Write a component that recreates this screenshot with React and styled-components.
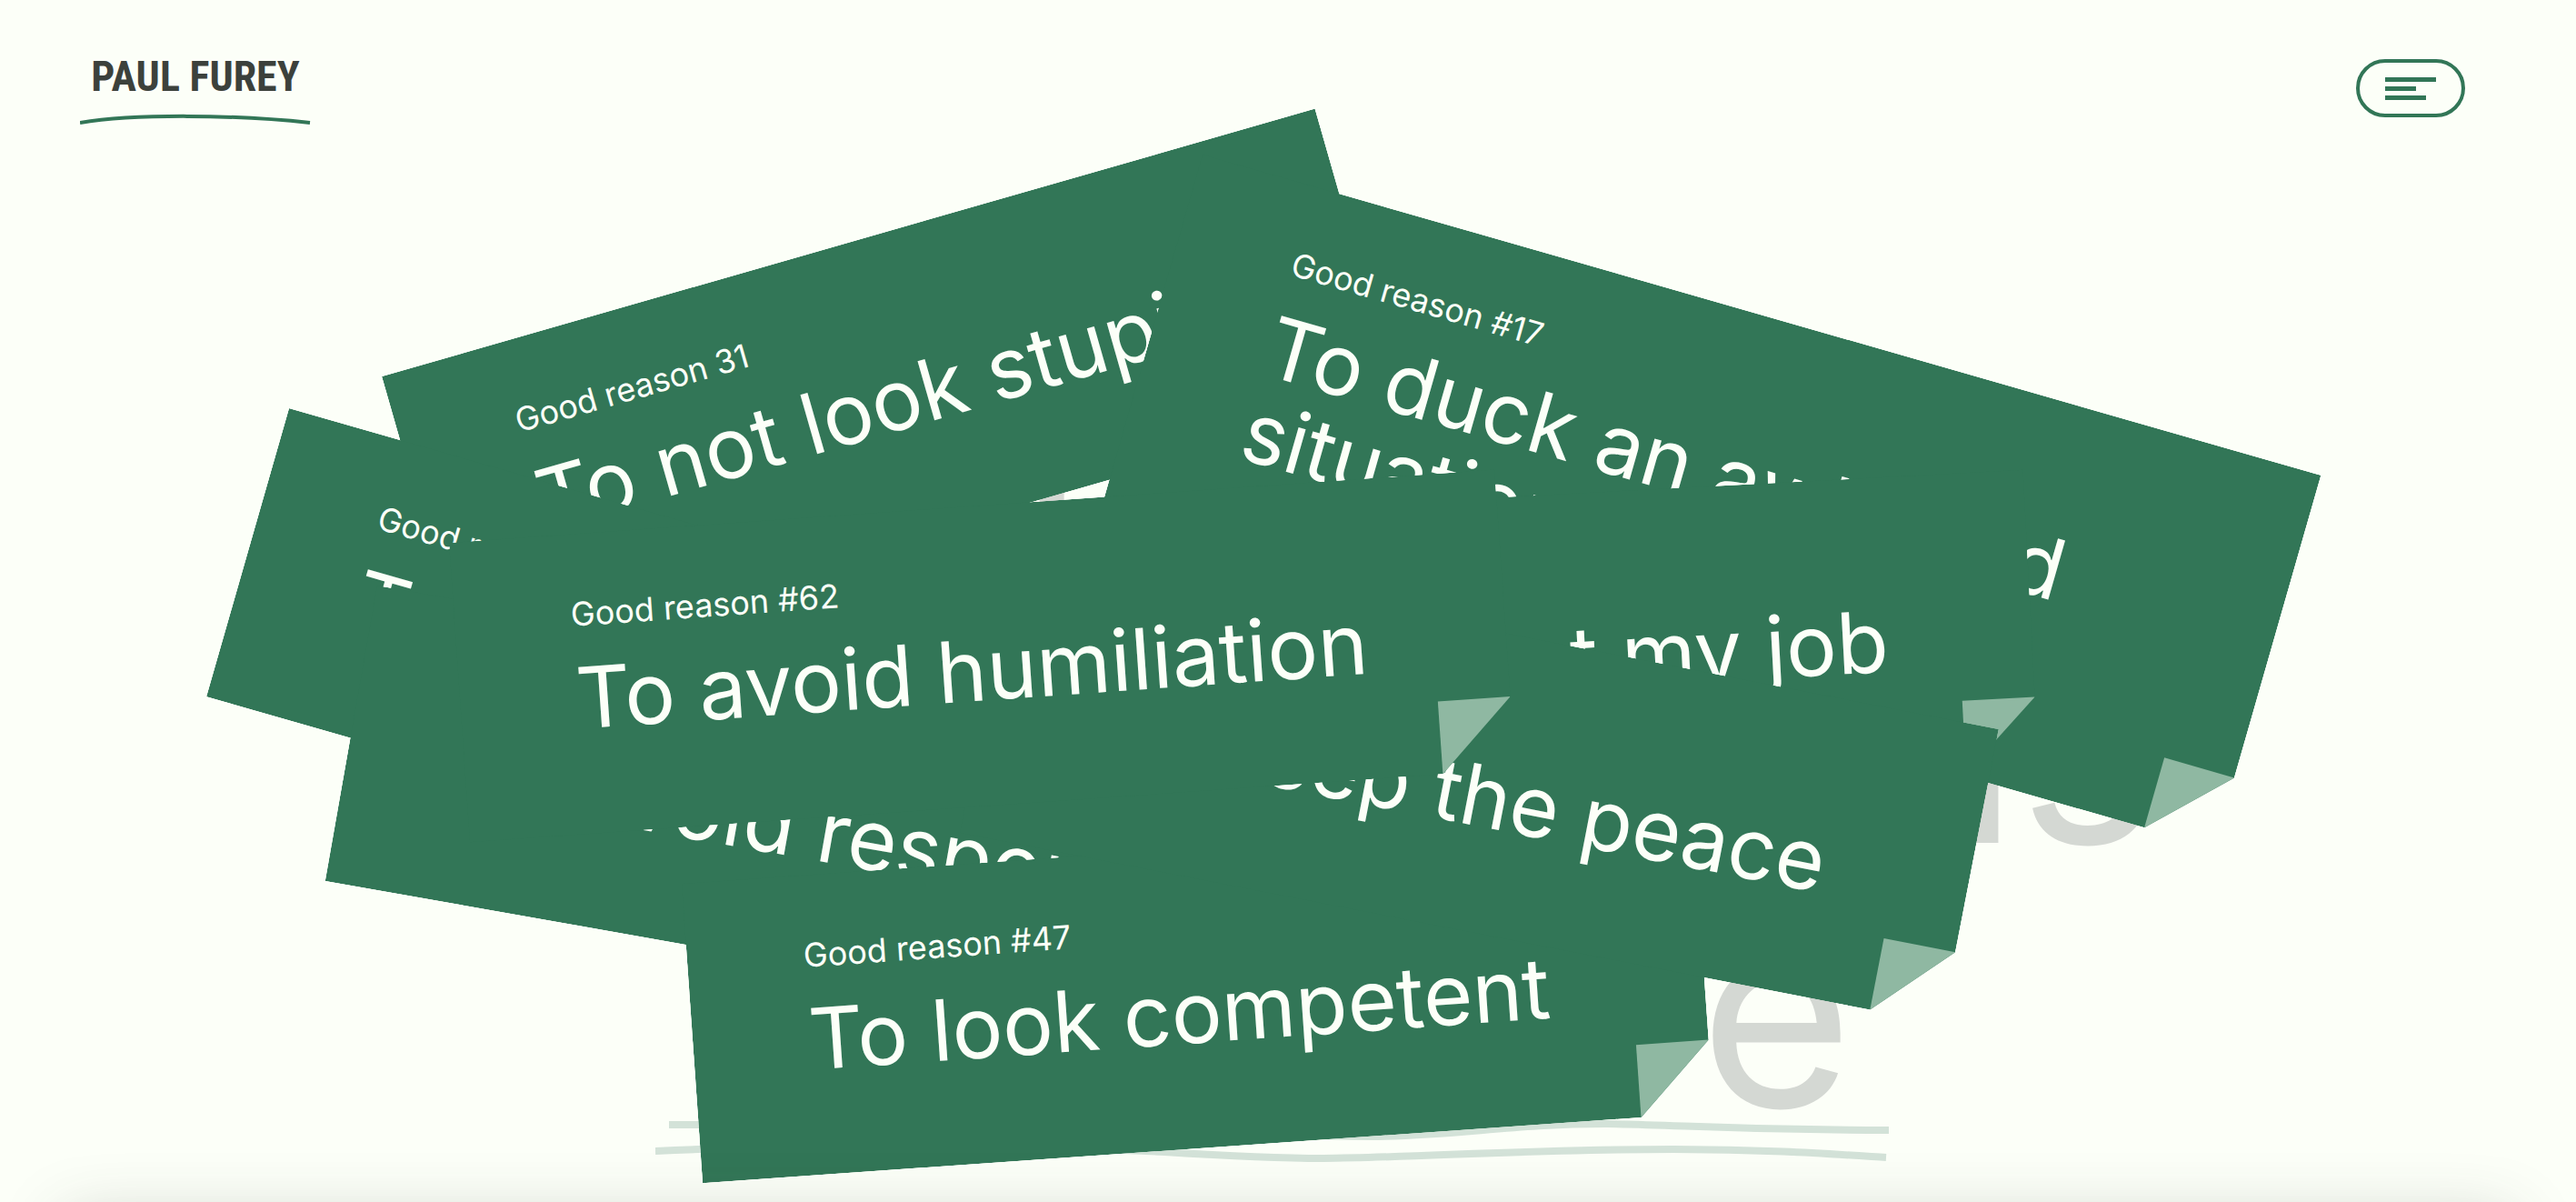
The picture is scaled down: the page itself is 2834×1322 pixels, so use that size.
import React from "react";
import styled, { createGlobalStyle } from "styled-components";

const GREEN = "#327657";
const PAPER = "#fcfff8";
const INK = "#3c413c";

const GlobalStyle = createGlobalStyle`
  *, *::before, *::after { box-sizing: border-box; }
  body {
    margin: 0;
    background: ${PAPER};
    color: ${INK};
    font-family: Inter, "Liberation Sans", sans-serif;
  }
`;

const Page = styled.div`
  position: relative;
  display: flex;
  flex-direction: column;
  height: 100vh;
  overflow: hidden;
`;

const Header = styled.header`
  display: flex;
  align-items: flex-start;
  justify-content: space-between;
  padding: 48px 122px 0 88px;
`;

const Logo = styled.a`
  display: flex;
  flex-direction: column;
  align-items: center;
  color: ${INK};
  text-decoration: none;
`;

const LogoName = styled.span`
  font: 700 46px/72px "Roboto Condensed", "Open Sans Condensed", Roboto, "Liberation Sans", sans-serif;
  white-space: nowrap;
`;

const LogoStroke = styled.svg`
  display: block;
  width: 254px;
  height: 18px;
`;

const MenuButton = styled.button`
  display: flex;
  flex-direction: column;
  justify-content: center;
  gap: 5px;
  width: 120px;
  height: 64px;
  margin-top: 17px;
  padding: 0 28px;
  border: 4px solid ${GREEN};
  border-radius: 32px;
  background: transparent;
  cursor: pointer;
`;

const MenuBar = styled.span`
  width: ${(p) => p.$width}px;
  height: 5px;
  background: ${GREEN};
`;

const Hero = styled.main`
  display: flex;
  flex-direction: column;
  align-items: center;
  padding-top: 249px;
`;

const Title = styled.h1`
  margin: 0;
  color: #d4d8d3;
  font-size: 290px;
  font-weight: 400;
  line-height: 290px;
  text-align: center;
  white-space: nowrap;
`;

const TitleLine = styled.span`
  display: block;
`;

const Underline = styled.svg`
  display: block;
  width: 1358px;
  height: 56px;
  margin: -29px 34px 0 0;
`;

const Notes = styled.ul`
  position: absolute;
  top: 0;
  left: 50%;
  margin: 0;
  padding: 0;
  list-style: none;
`;

const Note = styled.li`
  position: absolute;
  top: ${(p) => p.$y}px;
  left: ${(p) => p.$x}px;
  width: ${(p) => p.$width}px;
  padding: 64px 128px 102px 128px;
  background: ${GREEN};
  color: ${PAPER};
  transform: rotate(${(p) => p.$angle}deg);
  transform-origin: 0 0;
  clip-path: polygon(
    0 0,
    100% 0,
    100% calc(100% - 80px),
    calc(100% - 80px) 100%,
    0 100%
  );

  &::after {
    content: "";
    position: absolute;
    right: 0;
    bottom: 0;
    width: 80px;
    height: 80px;
    background: #8fb8a2;
  }
`;

const NoteLabel = styled.p`
  margin: 0 0 20px;
  font-size: 36px;
  font-weight: 400;
  line-height: 48px;
`;

const NoteText = styled.h2`
  margin: 0;
  font-size: 93px;
  font-weight: 400;
  line-height: 96px;
`;

const NextSection = styled.div`
  position: absolute;
  right: 72px;
  bottom: -220px;
  left: 72px;
  height: 200px;
  box-shadow: 0 0 70px rgba(60, 65, 60, 0.25);
`;

/* x is measured from the horizontal centre of the page */
const notes = [
  { label: "Good reason 31", text: "To not look stupid", x: -997, y: 414, width: 1068, angle: -16 },
  { label: "Good reason #17", text: "To duck an awkward situation", x: -94, y: 170, width: 1280, angle: 16 },
  { label: "Good reason #12", text: "To save face", x: -1099, y: 449, width: 900, angle: 16 },
  { label: "Good reason #23", text: "To protect my job", x: -244, y: 572, width: 1054, angle: -3 },
  { label: "Good reason #38", text: "To avoid responsibility", x: -1002, y: 644, width: 1340, angle: 10 },
  { label: "Good reason #47", text: "To look competent", x: -667, y: 972, width: 1115, angle: -4 },
  { label: "Good reason #54", text: "To keep the peace", x: -298, y: 592, width: 1100, angle: 11 },
  { label: "Good reason #62", text: "To avoid humiliation", x: -923, y: 597, width: 1153, angle: -4 },
];

export default function App() {
  return (
    <>
      <GlobalStyle />
      <Page>
        <Header>
          <Logo href="#">
            <LogoName>PAUL FUREY</LogoName>
            <LogoStroke viewBox="0 0 254 18" fill="none" aria-hidden="true">
              <path d="M0 15C60 5 170 6 253 15" stroke={GREEN} strokeWidth="4" />
            </LogoStroke>
          </Logo>
          <MenuButton type="button" aria-label="Menu">
            <MenuBar $width={56} />
            <MenuBar $width={34} />
            <MenuBar $width={45} />
          </MenuButton>
        </Header>
        <Hero>
          <Title>
            <TitleLine>Their</TitleLine>
            <TitleLine>Good reasons</TitleLine>
            <TitleLine>we share</TitleLine>
          </Title>
          <Underline viewBox="0 0 1358 56" fill="none" aria-hidden="true">
            <path
              d="M15 9H420C560 9 650 22 785 22C880 22 940 8 1046 8C1130 9 1180 15 1357 15"
              stroke="#d3e2d8"
              strokeWidth="8"
            />
            <path
              d="M0 38C180 30 400 30 560 39C640 44 680 46 735 46C840 45 960 36 1120 36C1220 36 1290 41 1354 45"
              stroke="#d3e2d8"
              strokeWidth="8"
            />
          </Underline>
        </Hero>
        <Notes>
          {notes.map((n) => (
            <Note key={n.label} $x={n.x} $y={n.y} $width={n.width} $angle={n.angle}>
              <NoteLabel>{n.label}</NoteLabel>
              <NoteText>{n.text}</NoteText>
            </Note>
          ))}
        </Notes>
        <NextSection />
      </Page>
    </>
  );
}
